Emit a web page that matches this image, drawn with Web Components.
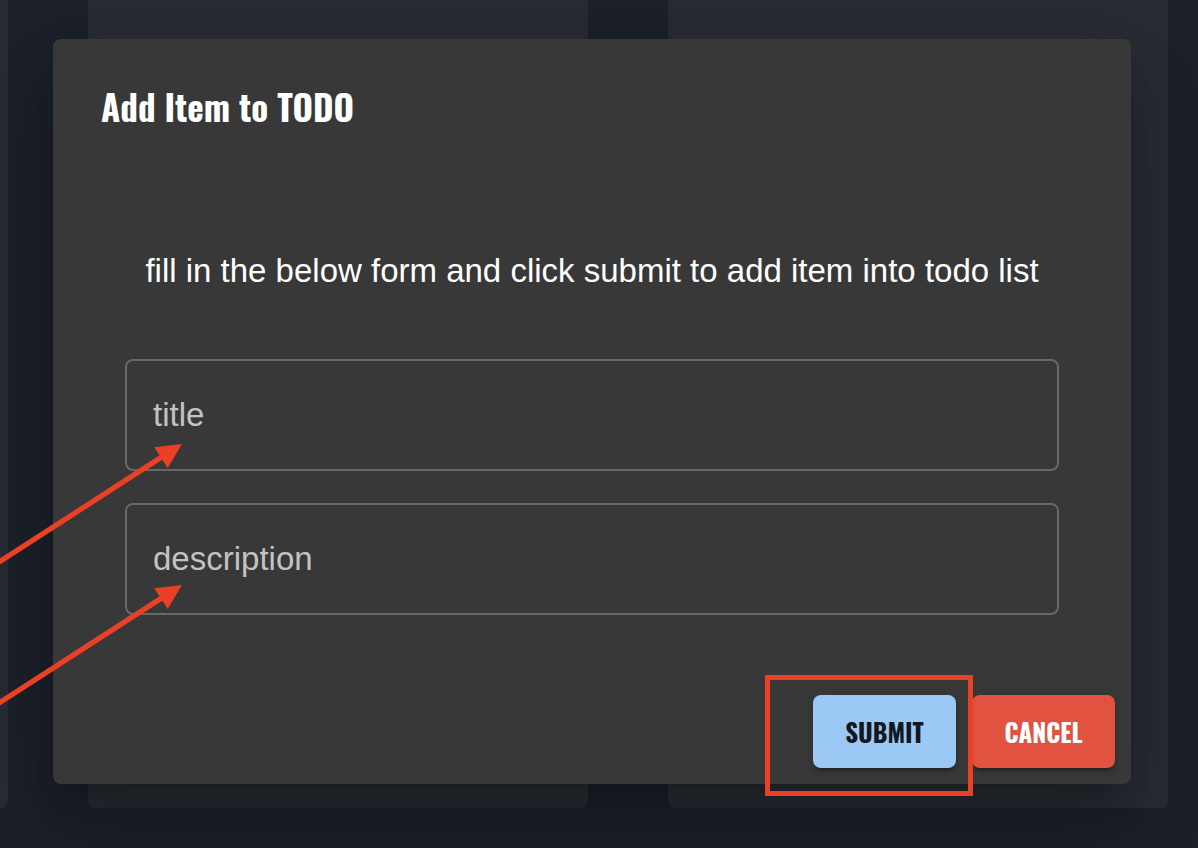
<!DOCTYPE html>
<html lang="en">
<head>
<meta charset="utf-8">
<meta name="viewport" content="width=device-width, initial-scale=1">
<title>Add Item to TODO</title>
<style>
  body { margin: 0; background: #1c212a; font-family: "Liberation Sans", Arial, sans-serif; color: #fff;
    --display: "Oswald", "Anton", "Liberation Sans", sans-serif; }
</style>
</head>
<body>
<todo-app></todo-app>
<script>
const define = (name, html) => customElements.define(name, class extends HTMLElement {
  constructor() {
    super();
    this.attachShadow({ mode: "open" }).innerHTML = html;
  }
});

define("board-column", `
  <style>
    :host { display: block; flex: 0 0 500px; background: #292c34; border-radius: 0 0 8px 8px; }
  </style>
  <slot></slot>`);

define("text-field", `
  <style>
    :host { display: grid; }
    label, input { grid-area: 1 / 1; font: 33px/40px "Liberation Sans", Arial, sans-serif; }
    label { align-self: center; padding: 0 28px; color: #c3c3c3; pointer-events: none; }
    input { box-sizing: border-box; width: 100%; height: 112px; padding: 0 26px; color: #fff;
      background: none; border: 2px solid #686868; border-radius: 8px; outline: none; }
    input:focus { border-color: #9cc8f5; }
    input:not(:placeholder-shown) + label { visibility: hidden; }
  </style>
  <input id="field" type="text" placeholder=" ">
  <label for="field"><slot></slot></label>`);

define("action-button", `
  <style>
    :host { display: block; position: relative; --face: #9cc8f5; --ink: #12181f; }
    :host([kind="danger"]) { --face: #e15241; --ink: #fff; }
    button { display: block; box-sizing: border-box; min-width: 143px; height: 73px; padding: 0 16px;
      border: 0; border-radius: 8px; background: var(--face); color: var(--ink); cursor: pointer;
      font: bold 25px/32px var(--display);
      text-transform: uppercase; white-space: nowrap;
      box-shadow: 0 6px 2px -4px rgba(0,0,0,.2), 0 4px 4px rgba(0,0,0,.14), 0 2px 10px rgba(0,0,0,.12); }
  </style>
  <button type="button"><slot></slot></button>
  <slot name="mark"></slot>`);

define("mark-frame", `
  <style>
    :host { display: block; position: absolute; inset: -20px -17px -28px -48px; z-index: 1;
      border: 5px solid #ea4025; pointer-events: none; }
  </style>`);

define("mark-arrows", `
  <style>
    :host { display: block; position: absolute; left: -53px; top: 391px; z-index: 1; pointer-events: none; }
    svg { display: block; }
  </style>
  <svg width="190" height="290" viewBox="0 430 190 290" fill="#ea4025" stroke="#ea4025" aria-hidden="true">
    <path d="M-4 564 L164 455.500 M-4 705 L164 596.500" stroke-width="5.200" fill="none"/>
    <path d="M182 444 L154.300 447.300 L167.700 468 Z M182 585 L154.300 588.300 L167.700 609 Z" stroke="none"/>
  </svg>`);

define("item-dialog", `
  <style>
    :host { display: block; }
    dialog { display: block; position: relative; box-sizing: border-box; width: auto; max-width: none;
      margin: 0; padding: 0; border: 0; border-radius: 8px; background: #383838; color: #fff;
      box-shadow: 0 22px 30px -14px rgba(0,0,0,.2), 0 48px 76px 6px rgba(0,0,0,.14), 0 18px 92px 16px rgba(0,0,0,.12); }
    h2 { margin: 0; padding: 35px 48px; font: bold 35px/64px var(--display); }
    p { margin: 0; padding: 72px 16px 62px; font-size: 33px; line-height: 52px; text-align: center; }
    form { display: grid; gap: 32px; padding: 0 72px; }
    footer { display: flex; justify-content: flex-end; gap: 16px; padding: 80px 16px 16px; }
  </style>
  <dialog open aria-labelledby="heading">
    <h2 id="heading"><slot name="heading"></slot></h2>
    <p><slot name="hint"></slot></p>
    <form><slot></slot></form>
    <footer><slot name="actions"></slot></footer>
    <mark-arrows></mark-arrows>
  </dialog>`);

define("todo-app", `
  <style>
    :host { display: grid; min-height: 100vh; overflow: hidden; }
    .board, .overlay { grid-area: 1 / 1; min-width: 0; }
    .board { display: flex; justify-content: flex-end; gap: 80px; padding: 0 30px 40px 0; }
    .overlay { position: relative; padding: 39px 67px 64px 53px; }
  </style>
  <div class="board">
    <board-column></board-column>
    <board-column></board-column>
    <board-column></board-column>
  </div>
  <div class="overlay">
    <item-dialog>
      <span slot="heading">Add Item to TODO</span>
      <span slot="hint">fill in the below form and click submit to add item into todo list</span>
      <text-field>title</text-field>
      <text-field>description</text-field>
      <action-button slot="actions">Submit<mark-frame slot="mark"></mark-frame></action-button>
      <action-button slot="actions" kind="danger">Cancel</action-button>
    </item-dialog>
  </div>`);
</script>
</body>
</html>
